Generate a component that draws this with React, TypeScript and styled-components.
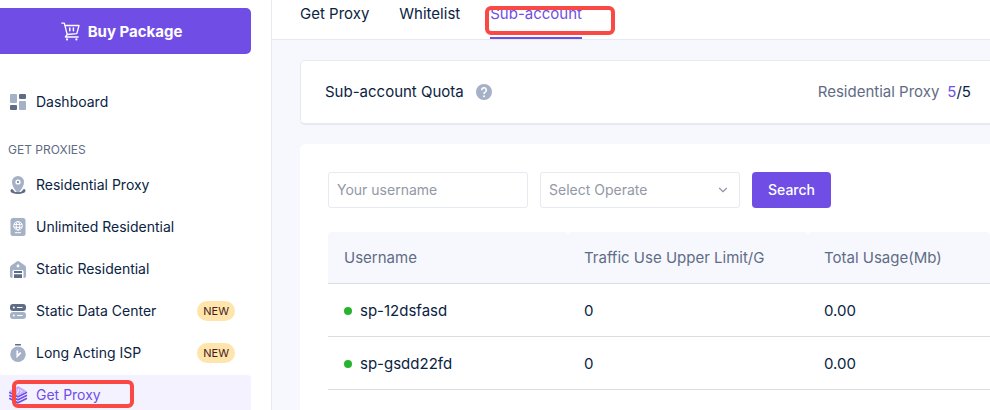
import React from "react";
import styled, { createGlobalStyle, css } from "styled-components";
import { ChevronDown } from "lucide-react";

const c = {
  purple: "#704ee6",
  ink: "#0a2342",
  slate: "#5f6c85",
  mist: "#a5b1c6",
  line: "#e6e9f0",
  canvas: "#f7f8fd",
  red: "#fa4845",
};

const GlobalStyle = createGlobalStyle`
  *, *::before, *::after { box-sizing: border-box; }
  body {
    margin: 0;
    font-family: Inter, "Noto Sans", sans-serif;
    font-size: 15px;
    line-height: 20px;
    color: ${c.ink};
    background: ${c.canvas};
  }
  button, input, select { font: inherit; }
  a { color: inherit; text-decoration: none; }
`;

const Layout = styled.div`
  display: grid;
  grid-template-columns: 272px minmax(0, 1fr);
  height: 100vh;
  overflow: hidden;
`;

const Sidebar = styled.aside`
  background: #fff;
  border-right: 1px solid ${c.line};
  padding: 8px 20px 0 0;
`;

const BuyButton = styled.button`
  display: flex;
  align-items: center;
  justify-content: center;
  gap: 8px;
  width: 100%;
  height: 46px;
  padding: 1px 8px 0 0;
  border: 0;
  border-radius: 0 5px 5px 0;
  background: ${c.purple};
  color: #fff;
  font-weight: 700;
  cursor: pointer;
`;

const Menu = styled.nav`
  display: flex;
  flex-direction: column;
  gap: 2px;
  margin-top: 28px;
`;

const MenuHeading = styled.h2`
  margin: 16px 0 3px;
  padding-left: 8px;
  font-size: 12px;
  font-weight: 400;
  color: ${c.slate};
`;

const MenuLink = styled.a<{ $active?: boolean }>`
  position: relative;
  display: flex;
  align-items: center;
  gap: 10px;
  height: 40px;
  padding: 0 16px 0 10px;
  border-radius: 0 4px 4px 0;
  font-size: 14px;
  ${(p) =>
    p.$active &&
    css`
      background: #f4f2ff;
      color: ${c.purple};
    `}
  svg { flex: none; overflow: visible; }
`;

const Badge = styled.span`
  margin-left: auto;
  padding: 0 6px;
  border-radius: 10px;
  background: #ffe5ab;
  color: #44201c;
  font-size: 11px;
`;

const Marker = styled.span<{ $inset: string }>`
  position: absolute;
  inset: ${(p) => p.$inset};
  border: 4px solid ${c.red};
  border-radius: 6px;
  pointer-events: none;
`;

const Main = styled.main`
  display: flex;
  flex-direction: column;
`;

const Tabs = styled.nav`
  display: flex;
  gap: 30px;
  height: 40px;
  padding-left: 28px;
  background: #fff;
  border-bottom: 1px solid ${c.line};
`;

const Tab = styled.a<{ $active?: boolean }>`
  position: relative;
  padding-top: 4px;
  border-bottom: 2px solid ${(p) => (p.$active ? c.purple : "transparent")};
  color: ${(p) => (p.$active ? c.purple : c.ink)};
`;

const QuotaCard = styled.section`
  display: flex;
  align-items: center;
  gap: 12px;
  margin: 20px 0 0 28px;
  padding: 21px 19px 21px 24px;
  border: 1px solid ${c.line};
  border-width: 1px 0 2px 1px;
  border-radius: 5px 0 0 5px;
  background: #fff;
`;

const QuotaValue = styled.div`
  display: flex;
  gap: 8px;
  margin-left: auto;
  color: ${c.slate};
`;

const Count = styled.span`
  color: ${c.ink};
`;

const Used = styled.span`
  color: ${c.purple};
`;

const HelpButton = styled.button`
  display: flex;
  padding: 0;
  border: 0;
  background: none;
`;

const Panel = styled.section`
  flex: 1;
  margin: 19px 0 0 28px;
  padding: 28px 0 0 28px;
  border-radius: 6px 0 0 0;
  background: #fff;
`;

const Filters = styled.form`
  display: flex;
  gap: 12px;
  margin-bottom: 24px;
  font-size: 14px;
`;

const field = css`
  width: 200px;
  height: 36px;
  padding: 0 8px;
  border: 1px solid ${c.line};
  border-radius: 3px;
  background: #fff;
  color: #9298a5;
  outline: none;
`;

const TextInput = styled.input`
  ${field}
  padding-bottom: 1px;
  &::placeholder { color: #9298a5; opacity: 1; }
`;

const SelectWrap = styled.div`
  display: grid;
  align-items: center;
  > * { grid-area: 1 / 1; }
  > svg { justify-self: end; margin-right: 10px; pointer-events: none; }
`;

const Select = styled.select`
  ${field}
  appearance: none;
`;

const SearchButton = styled.button`
  height: 36px;
  padding: 0 16px;
  border: 0;
  border-radius: 4px;
  background: ${c.purple};
  color: #fff;
  font-weight: 500;
`;

const Table = styled.table`
  width: 100%;
  table-layout: fixed;
  border-collapse: separate;
  border-spacing: 0;
  text-align: left;
`;

const HeadCell = styled.th<{ $last?: boolean }>`
  width: ${(p) => (p.$last ? "auto" : "240px")};
  height: 52px;
  padding: 0 16px;
  border-bottom: 1px solid #dadde3;
  border-radius: 4px 4px 0 0;
  background: ${c.canvas};
  color: ${c.slate};
  font-weight: 400;
`;

const Cell = styled.td`
  height: 53px;
  padding: 1px 16px 0;
  border-bottom: 1px solid #dcdcde;
`;

const User = styled.span`
  display: flex;
  align-items: center;
  gap: 8px;
  &::before {
    content: "";
    width: 8px;
    height: 8px;
    border-radius: 50%;
    background: #27b42c;
  }
`;

const CartIcon = () => (
  <svg width="19" height="19" viewBox="0 0 19 19" fill="none" stroke="#fff" strokeWidth="1.3" strokeLinecap="round" strokeLinejoin="round" aria-hidden="true">
    <path d="M.8 1.2h2.5l2.9 11.3M4 3.5h14l-2.2 8.2-9.6.8-1.8 2.5h12.8" />
    <path d="M8.8 6.1v2.7M12.4 6.1v2.7" strokeWidth="1.5" />
    <circle cx="6" cy="17.4" r="1.1" fill="#fff" stroke="none" />
    <circle cx="15.4" cy="17.4" r="1.1" fill="#fff" stroke="none" />
  </svg>
);

const DashboardIcon = () => (
  <svg width="16" height="16" viewBox="0 0 16 16" aria-hidden="true">
    <rect width="7" height="9" rx="1" fill={c.mist} />
    <rect x="9" width="7" height="5" rx="1" fill={c.slate} />
    <rect y="11" width="7" height="5" rx="1" fill={c.slate} />
    <rect x="9" y="7" width="7" height="9" rx="1" fill={c.mist} />
  </svg>
);

const PinIcon = () => (
  <svg width="16" height="18" viewBox="0 0 16 18" aria-hidden="true">
    <path d="M2 12.8C-1 14.4.2 18 8 18s9-3.600 6-5.200L11 16H5z" fill={c.slate} />
    <path d="M8 0a6 6 0 0 1 6 6.200c0 3.300-2.200 6.600-4.300 9.300q-1.700 1.700-3.400 0C4.200 12.800 2 9.500 2 6.200A6 6 0 0 1 8 0z" fill={c.mist} />
    <circle cx="8" cy="6" r="2.6" fill="#fff" />
    <circle cx="8" cy="6" r="1" fill={c.slate} />
  </svg>
);

const PassportIcon = () => (
  <svg width="16" height="18" viewBox="0 0 16 18" fill="none" stroke="#fff" aria-hidden="true">
    <rect x=".5" width="15" height="18" rx="2.5" fill={c.mist} stroke="none" />
    <circle cx="8" cy="7.8" r="4.3" />
    <ellipse cx="8" cy="7.8" rx="1.8" ry="4.3" />
    <path d="M4 6.4h8M4 9.3h8M5 14.700h6" />
  </svg>
);

const WarehouseIcon = () => (
  <svg width="16" height="17" viewBox="0 0 16 17" aria-hidden="true">
    <path d="M6.8.5q1.200-.8 2.400 0l5.700 4q1.100.8 1.100 2V15q0 2-2 2H2q-2 0-2-2V6.500q0-1.200 1.100-2z" fill={c.mist} />
    <circle cx="8" cy="5" r="1.4" fill="#fff" />
    <path d="M2.500 17v-6.500Q2.500 9 4 9h8Q13.500 9 13.500 10.500V17z" fill="#fff" />
    <path d="M4 10h8v2H4zM4 13.300h8V17H4z" fill={c.slate} />
  </svg>
);

const ServerIcon = () => (
  <svg width="16" height="15" viewBox="0 0 16 15" aria-hidden="true">
    <rect width="16" height="7" rx="3" fill={c.slate} />
    <rect y="8" width="16" height="7" rx="3" fill={c.mist} />
    <path d="M7 3.500h5.500M7 11.500h5.500" stroke="#fff" strokeWidth="1.2" />
    <circle cx="3.8" cy="3.5" r="1" fill="#fff" />
    <circle cx="3.8" cy="11.5" r="1" fill="#fff" />
  </svg>
);

const TimerIcon = () => (
  <svg width="16" height="18" viewBox="0 0 16 18" aria-hidden="true">
    <rect x="5" width="6" height="1.6" rx=".5" fill={c.slate} />
    <circle cx="8" cy="10.2" r="7.7" fill={c.mist} />
    <path d="M7.300 6.500v5.700l3.500-3.500" fill="none" stroke="#fff" strokeWidth="1.7" />
  </svg>
);

const LayersIcon = () => (
  <svg width="16" height="18" viewBox="0 0 16 18" fill="none" aria-hidden="true">
    <path d="M-.8 12.300l8.800 4.400 9-4.400M-.8 9.300l8.800 4.400 9-4.400M-.8 6.300l8.800 4.400 9-4.400" stroke={c.purple} strokeWidth="1.7" />
    <path d="M8 0l9 5.200-9 4.600-9-4.600z" fill="#c6adff" />
    <path d="M6 3.800L4.500 5.300 6 6.700M10.200 3.800l1.500 1.500-1.500 1.400M8.800 3L7.400 7.300" stroke="#fff" strokeWidth=".9" />
  </svg>
);

const HelpIcon = () => (
  <svg width="16" height="16" viewBox="0 0 16 16" fill="none" aria-hidden="true">
    <circle cx="8" cy="8" r="8" fill={c.mist} />
    <path d="M5.700 6.200a2.300 2.300 0 1 1 3.500 1.900Q8 8.700 8 9.900" stroke="#fff" strokeWidth="1.6" />
    <circle cx="8" cy="12.2" r="1" fill="#fff" />
  </svg>
);

const proxies = [
  { label: "Residential Proxy", Icon: PinIcon },
  { label: "Unlimited Residential", Icon: PassportIcon },
  { label: "Static Residential", Icon: WarehouseIcon },
  { label: "Static Data Center", Icon: ServerIcon, isNew: true },
  { label: "Long Acting ISP", Icon: TimerIcon, isNew: true },
];

const accounts = [
  { name: "sp-12dsfasd", limit: "0", usage: "0.00" },
  { name: "sp-gsdd22fd", limit: "0", usage: "0.00" },
];

export default function App() {
  return (
    <>
      <GlobalStyle />
      <Layout>
        <Sidebar>
          <BuyButton type="button">
            <CartIcon />
            Buy Package
          </BuyButton>
          <Menu aria-label="Main">
            <MenuLink href="#dashboard">
              <DashboardIcon />
              Dashboard
            </MenuLink>
            <MenuHeading>GET PROXIES</MenuHeading>
            {proxies.map(({ label, Icon, isNew }) => (
              <MenuLink href="#proxies" key={label}>
                <Icon />
                {label}
                {isNew && <Badge>NEW</Badge>}
              </MenuLink>
            ))}
            <MenuLink href="#get-proxy" $active aria-current="page">
              <LayersIcon />
              Get Proxy
              <Marker $inset="5px 117px 7px 12px" />
            </MenuLink>
          </Menu>
        </Sidebar>
        <Main>
          <Tabs aria-label="Proxy settings">
            <Tab href="#get">Get Proxy</Tab>
            <Tab href="#whitelist">Whitelist</Tab>
            <Tab href="#sub-account" $active aria-current="page">
              Sub-account
              <Marker $inset="6px -33px 2px -5px" />
            </Tab>
          </Tabs>
          <QuotaCard>
            <span>Sub-account Quota</span>
            <HelpButton type="button" aria-label="About the quota">
              <HelpIcon />
            </HelpButton>
            <QuotaValue>
              Residential Proxy
              <Count>
                <Used>5</Used>/5
              </Count>
            </QuotaValue>
          </QuotaCard>
          <Panel>
            <Filters onSubmit={(e) => e.preventDefault()}>
              <TextInput aria-label="Username" placeholder="Your username" />
              <SelectWrap>
                <Select aria-label="Operate" defaultValue="">
                  <option value="">Select Operate</option>
                </Select>
                <ChevronDown size={14} strokeWidth={2} color="#9298a5" />
              </SelectWrap>
              <SearchButton type="submit">Search</SearchButton>
            </Filters>
            <Table>
              <thead>
                <tr>
                  <HeadCell scope="col">Username</HeadCell>
                  <HeadCell scope="col">Traffic Use Upper Limit/G</HeadCell>
                  <HeadCell scope="col" $last>Total Usage(Mb)</HeadCell>
                </tr>
              </thead>
              <tbody>
                {accounts.map((a) => (
                  <tr key={a.name}>
                    <Cell>
                      <User>{a.name}</User>
                    </Cell>
                    <Cell>{a.limit}</Cell>
                    <Cell>{a.usage}</Cell>
                  </tr>
                ))}
              </tbody>
            </Table>
          </Panel>
        </Main>
      </Layout>
    </>
  );
}
